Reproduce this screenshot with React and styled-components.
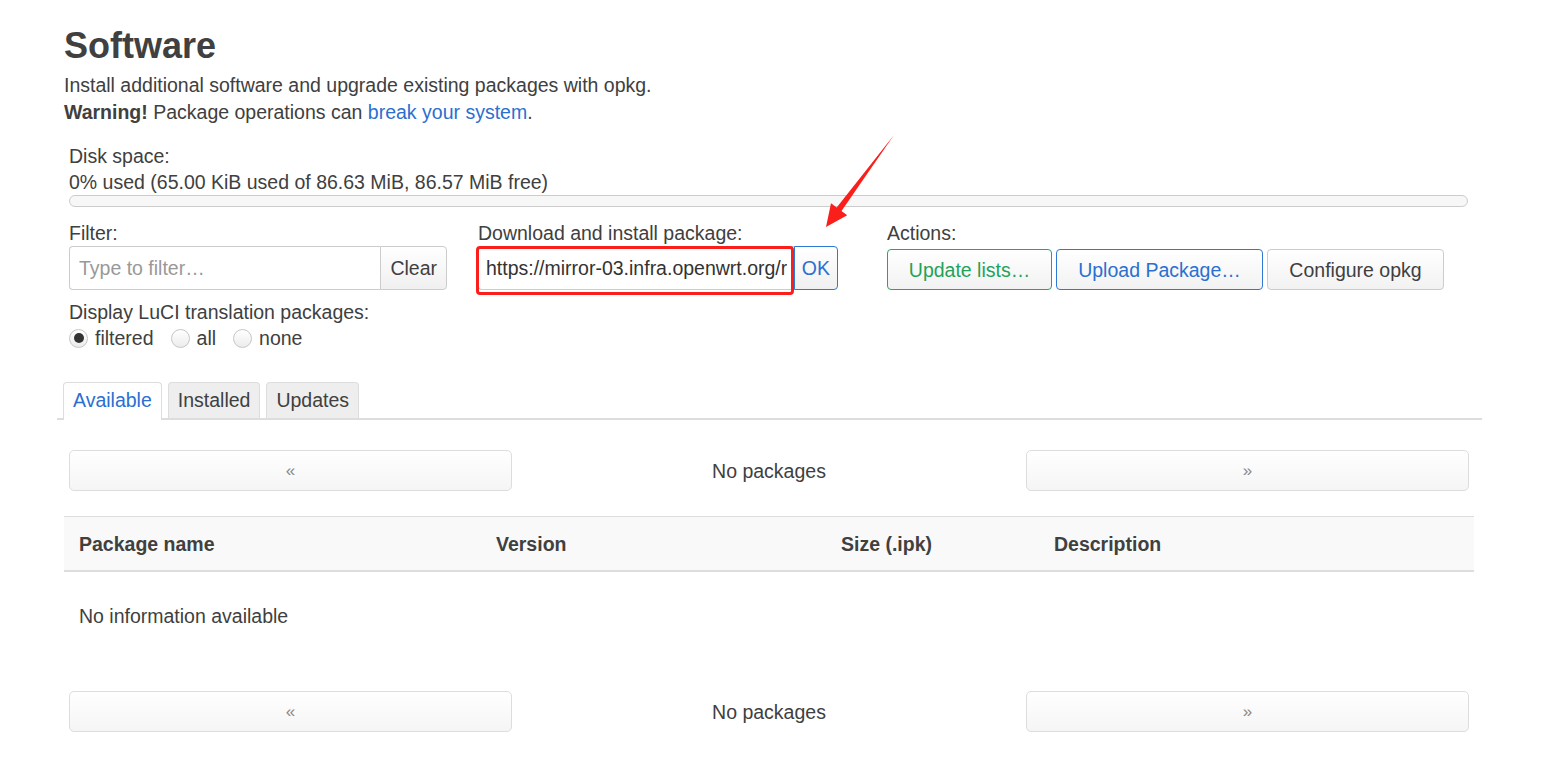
import styled, { createGlobalStyle } from "styled-components";

const GlobalStyle = createGlobalStyle`
  body {
    margin: 0;
    background: #fff;
    color: #404040;
    font-family: "Liberation Sans", Arial, sans-serif;
    font-size: 19.5px;
    line-height: 26px;
  }
  * { box-sizing: border-box; }
`;

const Page = styled.div`
  position: relative;
  width: 1542px;
  min-height: 777px;
`;

const Main = styled.div`
  margin-left: 57px;
  width: 1425px;
  padding-top: 26px;
`;

const Header = styled.div`
  padding-left: 7px;
`;

const Title = styled.h2`
  margin: 0;
  font-size: 36px;
  line-height: 40px;
  font-weight: bold;
`;

const Intro = styled.div`
  margin-top: 6px;
  line-height: 27px;
`;

const Link = styled.a`
  color: #2b6fd0;
  text-decoration: none;
`;

const Section = styled.div`
  padding: 0 14px 0 12px;
`;

const DiskInfo = styled.div`
  margin-top: 17px;
`;

const Bar = styled.div`
  height: 12px;
  border: 1px solid #ccc;
  border-radius: 6px;
  background: #f7f7f7;
`;

const Fields = styled.div`
  display: grid;
  grid-template-columns: 409px 409px auto;
  margin-top: 13px;
`;

const Label = styled.div`
  line-height: 26px;
`;

const Group = styled.div`
  position: relative;
  display: flex;
  width: ${(p) => p.$width}px;
  height: 44px;
`;

const TextInput = styled.input`
  flex: 1;
  min-width: 0;
  height: 44px;
  border: 1px solid #ccc;
  border-right: none;
  border-radius: 4px 0 0 4px;
  padding: 0 ${(p) => p.$pad}px;
  font: inherit;
  color: #333;
  background: #fff;
  outline: none;
  &::placeholder {
    color: #999;
  }
`;

const AddonButton = styled.button`
  height: 44px;
  padding: 0 ${(p) => p.$pad}px;
  border: 1px solid ${(p) => p.$border || "#ccc"};
  border-radius: 0 4px 4px 0;
  background: linear-gradient(#fff, #f0f0f0);
  color: ${(p) => p.$color || "#404040"};
  font: inherit;
`;

const Highlight = styled.div`
  position: absolute;
  left: -2px;
  top: 0;
  right: 44px;
  bottom: -5px;
  border: 3px solid #fa1f1a;
  border-radius: 4px;
  pointer-events: none;
`;

const Actions = styled.div`
  display: flex;
  gap: 4px;
  margin-top: 3px;
`;

const ActionButton = styled.button`
  height: 41px;
  width: ${(p) => p.$width}px;
  border: 1px solid ${(p) => p.$border};
  border-radius: 4px;
  background: linear-gradient(#fff, #f2f2f2);
  color: ${(p) => p.$color};
  font: inherit;
`;

const Translations = styled.div`
  margin-top: 9px;
`;

const RadioRow = styled.div`
  display: flex;
  align-items: center;
  height: 26px;
`;

const RadioItem = styled.label`
  display: flex;
  align-items: center;
  gap: 7px;
  margin-right: 17px;
`;

const RadioDot = styled.span`
  position: relative;
  width: 19px;
  height: 19px;
  border-radius: 50%;
  border: 1px solid #c6c6c6;
  background: linear-gradient(#fff, #ececec);
  &::after {
    content: "";
    display: ${(p) => (p.$checked ? "block" : "none")};
    position: absolute;
    left: 3.5px;
    top: 3.5px;
    width: 10px;
    height: 10px;
    border-radius: 50%;
    background: #333;
  }
`;

const Tabs = styled.ul`
  display: flex;
  gap: 6px;
  list-style: none;
  margin: 31px 0 0;
  padding: 0 0 0 6px;
  border-bottom: 2px solid #ddd;
`;

const Tab = styled.li`
  line-height: 34px;
  padding: 0 9px;
  border: 1px solid #ddd;
  border-bottom: none;
  border-radius: 4px 4px 0 0;
  background: ${(p) => (p.$active ? "#fff" : "#eee")};
  color: ${(p) => (p.$active ? "#2b6fd0" : "#404040")};
  margin-bottom: ${(p) => (p.$active ? "-2px" : "0")};
  height: ${(p) => (p.$active ? "38px" : "36px")};
`;

const Pager = styled.div`
  display: grid;
  grid-template-columns: 443px 1fr 443px;
  align-items: center;
  margin: ${(p) => p.$top}px 13px 0 12px;
`;

const PagerButton = styled.button`
  height: 41px;
  border: 1px solid #ddd;
  border-radius: 5px;
  background: linear-gradient(#fff, #f5f5f5);
  color: #888;
  font: inherit;
  font-size: 17px;
`;

const PagerText = styled.div`
  text-align: center;
`;

const Table = styled.div`
  margin: 25px 8px 0 7px;
`;

const Row = styled.div`
  display: grid;
  grid-template-columns: 417px 345px 213px 1fr;
`;

const HeadRow = styled(Row)`
  height: 56px;
  align-items: center;
  background: #f9f9f9;
  border-top: 1px solid #ddd;
  border-bottom: 2px solid #ddd;
  font-weight: bold;
`;

const Cell = styled.div`
  padding: 0 15px;
`;

const EmptyRow = styled.div`
  padding: 31px 15px;
`;

const Arrow = styled.svg`
  position: absolute;
  left: 815px;
  top: 128px;
`;

const App = () => {
  return (
    <Page>
      <GlobalStyle />
      <Main>
        <Header>
          <Title>Software</Title>
          <Intro>
            Install additional software and upgrade existing packages with opkg.
            <br />
            <strong>Warning!</strong> Package operations can{" "}
            <Link href="#">break your system</Link>.
          </Intro>
        </Header>

        <Section>
          <DiskInfo>
            <Label>Disk space:</Label>
            <Label>0% used (65.00 KiB used of 86.63 MiB, 86.57 MiB free)</Label>
            <Bar />
          </DiskInfo>

          <Fields>
            <div>
              <Label>Filter:</Label>
              <Group $width={378}>
                <TextInput $pad={9} placeholder="Type to filter…" />
                <AddonButton $pad={9}>Clear</AddonButton>
              </Group>
            </div>
            <div>
              <Label>Download and install package:</Label>
              <Group $width={360}>
                <TextInput
                  $pad={7}
                  readOnly
                  defaultValue="https://mirror-03.infra.openwrt.org/releases/packages/luci-app.ipk"
                />
                <AddonButton $pad={7} $border="#2f79d6" $color="#2b6fd0">
                  OK
                </AddonButton>
                <Highlight />
              </Group>
            </div>
            <div>
              <Label>Actions:</Label>
              <Actions>
                <ActionButton $width={165} $border="#2aa55d" $color="#1fa35a">
                  Update lists…
                </ActionButton>
                <ActionButton $width={207} $border="#2f79d6" $color="#2b6fd0">
                  Upload Package…
                </ActionButton>
                <ActionButton $width={177} $border="#ccc" $color="#404040">
                  Configure opkg
                </ActionButton>
              </Actions>
            </div>
          </Fields>

          <Translations>
            <Label>Display LuCI translation packages:</Label>
            <RadioRow>
              <RadioItem>
                <RadioDot $checked />
                filtered
              </RadioItem>
              <RadioItem>
                <RadioDot />
                all
              </RadioItem>
              <RadioItem>
                <RadioDot />
                none
              </RadioItem>
            </RadioRow>
          </Translations>
        </Section>

        <Tabs>
          <Tab $active>Available</Tab>
          <Tab>Installed</Tab>
          <Tab>Updates</Tab>
        </Tabs>

        <Pager $top={30}>
          <PagerButton>«</PagerButton>
          <PagerText>No packages</PagerText>
          <PagerButton>»</PagerButton>
        </Pager>

        <Table>
          <HeadRow>
            <Cell>Package name</Cell>
            <Cell>Version</Cell>
            <Cell>Size (.ipk)</Cell>
            <Cell>Description</Cell>
          </HeadRow>
          <EmptyRow>No information available</EmptyRow>
        </Table>

        <Pager $top={31}>
          <PagerButton>«</PagerButton>
          <PagerText>No packages</PagerText>
          <PagerButton>»</PagerButton>
        </Pager>
      </Main>

      <Arrow width="90" height="105" viewBox="0 0 90 105">
        <polygon
          points="79,7 26.5,83.1 32.2,87.3 11,99 16,75.3 21.7,79.5"
          fill="#fa1f1a"
        />
      </Arrow>
    </Page>
  );
};

export default App;
